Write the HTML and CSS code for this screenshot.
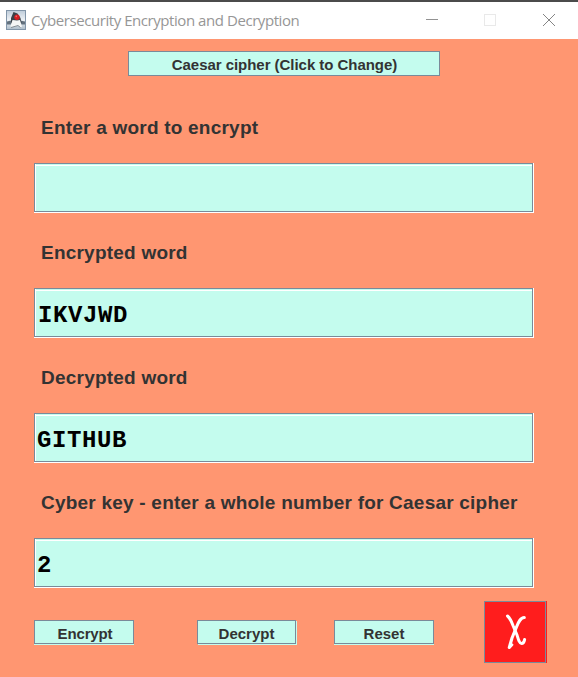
FILE: index.html
```html
<!DOCTYPE html>
<html lang="en">
<head>
<meta charset="utf-8">
<title>Cybersecurity Encryption and Decryption</title>
<link rel="stylesheet" href="styles.css">
</head>
<body>
<div class="window">
  <header class="titlebar">
    <svg class="app-icon" width="20" height="20" viewBox="0 0 20 20">
      <defs><linearGradient id="sky" x1="0" y1="0" x2="0" y2="1"><stop offset="0" stop-color="#bdcbd9"/><stop offset=".5" stop-color="#edf1f5"/><stop offset="1" stop-color="#aebdca"/></linearGradient></defs>
      <rect x=".5" y=".5" width="19" height="19" fill="url(#sky)" stroke="#8195a9"/>
      <path d="M1 11.5l4-1 1 4H1zM14 10.5l5 1v3h-5z" fill="#63717e"/>
      <path d="M7.5 2L11.5 3.5 14.5 8 15.5 13 13 14 5 13 5 8z" fill="#394149"/>
      <path d="M6.5 10L11 10.5 14 10 16 16.5 14.5 17.5 12 15.5 5 17.5 4.5 16z" fill="#f5f6f6"/>
      <path d="M5 17.5l7-2 2.5 2" stroke="#6e7880" stroke-width=".8" fill="none"/>
      <circle cx="11" cy="7.2" r="2.7" fill="#d51c22"/>
      <circle cx="10.3" cy="6.4" r=".8" fill="#f06a66"/>
    </svg>
    <h1 class="title">Cybersecurity Encryption and Decryption</h1>
    <svg class="controls" width="132" height="14" viewBox="0 0 132 14" fill="none">
      <path d="M1 6.5h12" stroke="#929292"/>
      <rect x="59.5" y="1.5" width="11" height="11" stroke="#e9e9e9"/>
      <path d="M118 1l12 12M130 1l-12 12" stroke="#858585"/>
    </svg>
  </header>
  <main class="content">
    <button class="btn btn-mode">Caesar cipher (Click to Change)</button>
    <section class="group">
      <label class="label">Enter a word to encrypt</label>
      <div class="field"><div class="field-inner"></div></div>
    </section>
    <section class="group">
      <label class="label">Encrypted word</label>
      <div class="field"><div class="field-inner field-shifted">IKVJWD</div></div>
    </section>
    <section class="group">
      <label class="label">Decrypted word</label>
      <div class="field"><div class="field-inner">GITHUB</div></div>
    </section>
    <section class="group">
      <label class="label">Cyber key - enter a whole number for Caesar cipher</label>
      <div class="field"><div class="field-inner">2</div></div>
    </section>
    <footer class="actions">
      <button class="btn btn-small btn-encrypt">Encrypt</button>
      <button class="btn btn-small btn-decrypt">Decrypt</button>
      <button class="btn btn-small">Reset</button>
      <button class="btn-exit" aria-label="Exit">
        <svg width="22" height="38" viewBox="0 0 22 38" fill="none" stroke="#fff" stroke-linecap="round" stroke-linejoin="round">
          <path d="M2.5 3C5 5 6.5 8.5 8 12.5L12 22C13.5 27 14.5 30.5 16.5 30.5C18.5 30.5 19.3 28.5 19.6 26.5" stroke-width="3"/>
          <path d="M19.3 4.5C15.5 4.5 13.5 9 11.5 14L7 25 4.3 34.5 6.8 31.8" stroke-width="3.1"/>
        </svg>
      </button>
    </footer>
  </main>
</div>
</body>
</html>
```

FILE: styles.css
```css
* { box-sizing: border-box; }
body { margin: 0; }
.window {
  width: 578px;
  height: 677px;
  overflow: hidden;
  background: #ff9671;
  font-family: "Liberation Sans", Arial, sans-serif;
}
.titlebar {
  display: flex;
  height: 39px;
  padding: 0 21px 0 6px;
  border-top: 2px solid #4b4b4b;
  background: #fff;
}
.app-icon { margin-top: 8px; }
.title {
  margin: 0 0 0 5px;
  color: #969696;
  font: 400 15px/37px "Open Sans", "Segoe UI", sans-serif;
  letter-spacing: -0.44px;
  white-space: nowrap;
}
.controls { margin: 11px 0 0 auto; }
.content {
  display: flex;
  flex-direction: column;
  padding: 12px 0 0 34px;
}
.btn {
  padding: 2px 0 0;
  border: 1px solid #7a8a99;
  background: #c4fcee;
  color: #333;
  font: 700 15px/22px "Liberation Sans", Arial, sans-serif;
  white-space: nowrap;
}
.btn-mode {
  width: 312px;
  height: 25px;
  margin: 0 0 25px 94px;
  padding-left: 1px;
  letter-spacing: -0.04px;
}
.group { height: 125px; }
.label {
  display: block;
  height: 62px;
  padding: 16px 0 0 7px;
  color: #333;
  font-size: 19px;
  font-weight: 700;
  line-height: 21px;
  letter-spacing: 0.22px;
  white-space: nowrap;
}
.field {
  width: 500px;
  height: 50px;
  border-right: 1px solid #fff;
  border-bottom: 1px solid #fff;
}
.field-inner {
  height: 49px;
  padding: 4px 0 0 2px;
  border: 1px solid #7a8a99;
  background:
    linear-gradient(#fff, #fff) 0 1px / 100% 1px no-repeat,
    linear-gradient(#fff, #fff) 0 0 / 1px 100% no-repeat,
    #c4fcee;
  color: #000;
  font: 700 24px/46px "Courier New", "Liberation Mono", monospace;
  letter-spacing: 0.6px;
}
.field-shifted { padding-left: 3px; }
.actions {
  display: flex;
  align-items: flex-start;
  height: 62px;
}
.btn-small {
  width: 100px;
  height: 24px;
  margin: 19px 0 0;
  box-shadow: 0 1px #c4fcee;
}
.btn-encrypt { padding-left: 2px; letter-spacing: -0.15px; }
.btn-decrypt {
  width: 99px;
  margin-left: 63px;
  margin-right: 38px;
  box-shadow: 1px 1px #c4fcee;
}
.btn-exit {
  display: flex;
  width: 62px;
  height: 62px;
  margin-left: 50px;
  padding: 11px 0 0 20px;
  border: 1px solid #7a8a99;
  background: #ff1d1d;
  box-shadow: 1px 0 #ff1d1d;
}
```
